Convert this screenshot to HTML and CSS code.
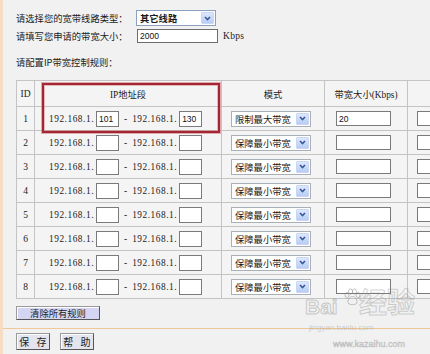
FILE: index.html
```html
<!DOCTYPE html>
<html lang="zh-CN">
<head>
<meta charset="utf-8">
<title>IP带宽控制</title>
<link rel="stylesheet" href="styles.css">
</head>
<body>
<div class="page">
  <div class="top">
    <div class="line">
      <span class="label">请选择您的宽带线路类型：</span>
      <div class="sel sel-top"><span class="bold">其它线路</span><span class="arr"><svg width="7" height="5" viewBox="0 0 7 5"><path d="M1 1 L3.5 3.6 L6 1" fill="none" stroke="#3d5a98" stroke-width="1.6"/></svg></span></div>
    </div>
    <div class="line l2">
      <span class="label">请填写您申请的带宽大小：</span>
      <input class="txt txt-bw" type="text" value="2000">
      <span class="unit">Kbps</span>
    </div>
    <div class="line l3"><span class="label">请配置IP带宽控制规则：</span></div>

    <div class="tablewrap">
      <table class="rules">
        <thead>
          <tr><th class="c-id">ID</th><th class="c-ip">IP地址段</th><th class="c-mode">模式</th><th class="c-bw">带宽大小(Kbps)</th><th class="c-x"></th></tr>
        </thead>
        <tbody>
          <tr><td class="id">1</td><td><div class="ipw"><span class="ip">192.168.1.</span><input class="txt box" type="text" value="101"><span class="dash">-</span><span class="ip">192.168.1.</span><input class="txt box box2" type="text" value="130"></div></td><td><div class="cw cw-mode"><div class="sel"><span>限制最大带宽</span><span class="arr"><svg width="7" height="5" viewBox="0 0 7 5"><path d="M1 1 L3.5 3.6 L6 1" fill="none" stroke="#3d5a98" stroke-width="1.6"/></svg></span></div></div></td><td><div class="cw cw-bw"><input class="txt bw" type="text" value="20"></div></td><td><div class="cw cw-x"><input class="txt xx" type="text" value=""></div></td></tr>
          <tr><td class="id">2</td><td><div class="ipw"><span class="ip">192.168.1.</span><input class="txt box" type="text" value=""><span class="dash">-</span><span class="ip">192.168.1.</span><input class="txt box box2" type="text" value=""></div></td><td><div class="cw cw-mode"><div class="sel"><span>保障最小带宽</span><span class="arr"><svg width="7" height="5" viewBox="0 0 7 5"><path d="M1 1 L3.5 3.6 L6 1" fill="none" stroke="#3d5a98" stroke-width="1.6"/></svg></span></div></div></td><td><div class="cw cw-bw"><input class="txt bw" type="text" value=""></div></td><td><div class="cw cw-x"><input class="txt xx" type="text" value=""></div></td></tr>
          <tr><td class="id">3</td><td><div class="ipw"><span class="ip">192.168.1.</span><input class="txt box" type="text" value=""><span class="dash">-</span><span class="ip">192.168.1.</span><input class="txt box box2" type="text" value=""></div></td><td><div class="cw cw-mode"><div class="sel"><span>保障最小带宽</span><span class="arr"><svg width="7" height="5" viewBox="0 0 7 5"><path d="M1 1 L3.5 3.6 L6 1" fill="none" stroke="#3d5a98" stroke-width="1.6"/></svg></span></div></div></td><td><div class="cw cw-bw"><input class="txt bw" type="text" value=""></div></td><td><div class="cw cw-x"><input class="txt xx" type="text" value=""></div></td></tr>
          <tr><td class="id">4</td><td><div class="ipw"><span class="ip">192.168.1.</span><input class="txt box" type="text" value=""><span class="dash">-</span><span class="ip">192.168.1.</span><input class="txt box box2" type="text" value=""></div></td><td><div class="cw cw-mode"><div class="sel"><span>保障最小带宽</span><span class="arr"><svg width="7" height="5" viewBox="0 0 7 5"><path d="M1 1 L3.5 3.6 L6 1" fill="none" stroke="#3d5a98" stroke-width="1.6"/></svg></span></div></div></td><td><div class="cw cw-bw"><input class="txt bw" type="text" value=""></div></td><td><div class="cw cw-x"><input class="txt xx" type="text" value=""></div></td></tr>
          <tr><td class="id">5</td><td><div class="ipw"><span class="ip">192.168.1.</span><input class="txt box" type="text" value=""><span class="dash">-</span><span class="ip">192.168.1.</span><input class="txt box box2" type="text" value=""></div></td><td><div class="cw cw-mode"><div class="sel"><span>保障最小带宽</span><span class="arr"><svg width="7" height="5" viewBox="0 0 7 5"><path d="M1 1 L3.5 3.6 L6 1" fill="none" stroke="#3d5a98" stroke-width="1.6"/></svg></span></div></div></td><td><div class="cw cw-bw"><input class="txt bw" type="text" value=""></div></td><td><div class="cw cw-x"><input class="txt xx" type="text" value=""></div></td></tr>
          <tr><td class="id">6</td><td><div class="ipw"><span class="ip">192.168.1.</span><input class="txt box" type="text" value=""><span class="dash">-</span><span class="ip">192.168.1.</span><input class="txt box box2" type="text" value=""></div></td><td><div class="cw cw-mode"><div class="sel"><span>保障最小带宽</span><span class="arr"><svg width="7" height="5" viewBox="0 0 7 5"><path d="M1 1 L3.5 3.6 L6 1" fill="none" stroke="#3d5a98" stroke-width="1.6"/></svg></span></div></div></td><td><div class="cw cw-bw"><input class="txt bw" type="text" value=""></div></td><td><div class="cw cw-x"><input class="txt xx" type="text" value=""></div></td></tr>
          <tr><td class="id">7</td><td><div class="ipw"><span class="ip">192.168.1.</span><input class="txt box" type="text" value=""><span class="dash">-</span><span class="ip">192.168.1.</span><input class="txt box box2" type="text" value=""></div></td><td><div class="cw cw-mode"><div class="sel"><span>保障最小带宽</span><span class="arr"><svg width="7" height="5" viewBox="0 0 7 5"><path d="M1 1 L3.5 3.6 L6 1" fill="none" stroke="#3d5a98" stroke-width="1.6"/></svg></span></div></div></td><td><div class="cw cw-bw"><input class="txt bw" type="text" value=""></div></td><td><div class="cw cw-x"><input class="txt xx" type="text" value=""></div></td></tr>
          <tr><td class="id">8</td><td><div class="ipw"><span class="ip">192.168.1.</span><input class="txt box" type="text" value=""><span class="dash">-</span><span class="ip">192.168.1.</span><input class="txt box box2" type="text" value=""></div></td><td><div class="cw cw-mode"><div class="sel"><span>保障最小带宽</span><span class="arr"><svg width="7" height="5" viewBox="0 0 7 5"><path d="M1 1 L3.5 3.6 L6 1" fill="none" stroke="#3d5a98" stroke-width="1.6"/></svg></span></div></div></td><td><div class="cw cw-bw"><input class="txt bw" type="text" value=""></div></td><td><div class="cw cw-x"><input class="txt xx" type="text" value=""></div></td></tr>
        </tbody>
      </table>
      <div class="mark"></div>
    </div>

    <button class="btn btn-clear" type="button">清除所有规则</button>
  </div>
  <div class="divider"></div>
  <div class="bottom">
    <button class="btn btn-sm" type="button">保 存</button>
    <button class="btn btn-sm" type="button">帮 助</button>
  </div>

  <div class="watermark" aria-hidden="true">
    <span class="wm-bai">Bai</span>
    <svg class="wm-paw" width="18" height="18" viewBox="0 0 18 18"><g fill="none" stroke="rgba(130,130,130,0.45)" stroke-width="1"><ellipse cx="4" cy="7" rx="2" ry="2.6"/><ellipse cx="7.5" cy="3.5" rx="2" ry="2.6"/><ellipse cx="11.5" cy="3.5" rx="2" ry="2.6"/><ellipse cx="15" cy="7" rx="2" ry="2.6"/><path d="M9.5 8.5 C6 8.5 4 13 5.5 15.5 C7 17 12 17 13.5 15.5 C15 13 13 8.5 9.5 8.5 Z"/></g></svg>
    <span class="wm-jy">经验</span>
    <span class="wm-url">jingyan.baidu.com</span>
    <span class="wm-url2">www.kazaihu.com</span>
  </div>
</div>
</body>
</html>
```

FILE: styles.css
```css
* { box-sizing: border-box; }

html, body {
  margin: 0;
  padding: 0;
}

body {
  width: 430px;
  height: 354px;
  overflow: hidden;
  background: #f1f1f1;
  font-family: "Liberation Serif", "Noto Sans CJK SC", serif;
  font-size: 9.3px;
  color: #1a1a1a;
}

.page {
  position: relative;
  height: 354px;
  border-left: 3px solid #f5dcc3;
}

.top {
  padding: 10px 0 0 13px;
}

.line {
  display: flex;
  align-items: center;
  height: 16px;
}

.l2 { margin-top: 2px; }
.l3 { margin-top: 10px; }

.label {
  width: 120px;
  white-space: nowrap;
  font-family: "Noto Sans CJK SC", sans-serif;
}

.l3 .label { width: auto; }

.bold { font-weight: bold; }

.sel {
  display: flex;
  align-items: center;
  justify-content: space-between;
  width: 80px;
  height: 16px;
  padding-left: 3px;
  background: #fff;
  border: 1px solid #a9b0b8;
  font-family: "Noto Sans CJK SC", sans-serif;
  white-space: nowrap;
}

.sel-top {
  border-color: #8aa2c0;
}

.arr {
  display: flex;
  align-items: center;
  justify-content: center;
  width: 13px;
  height: 12px;
  margin-right: 1px;
  border-radius: 1px;
  background: linear-gradient(#dde7fd, #b9ccf6);
  border: 1px solid #c9d7f5;
}

.txt {
  margin: 0;
  padding: 0 2px;
  background: #fff;
  border: 1px solid #7a7a7a;
  border-radius: 0;
  font-family: "Liberation Sans", sans-serif;
  font-size: 8.5px;
  color: #111;
  outline: none;
}

.txt-bw {
  width: 81px;
  height: 14px;
  margin-left: 1px;
  border-color: #6d6d6d;
}

.unit {
  margin-left: 5px;
  font-size: 9.5px;
  letter-spacing: 0.3px;
}

/* table */
.tablewrap {
  position: relative;
  margin-top: 10px;
  width: 452px;
}

.rules {
  width: 452px;
  table-layout: fixed;
  border-collapse: separate;
  border-spacing: 0;
  border-top: 1px solid #c4c4c4;
  border-left: 1px solid #c4c4c4;
}

.rules th,
.rules td {
  padding: 0;
  border-right: 1px solid #c4c4c4;
  border-bottom: 1px solid #c4c4c4;
  background: #f4f4f4;
  font-weight: normal;
  white-space: nowrap;
  overflow: hidden;
}

.rules thead tr { height: 26px; }
.rules tbody tr { height: 24px; }

.rules th {
  text-align: center;
  font-family: "Liberation Serif", "Noto Sans CJK SC", serif;
}

.c-id { width: 18px; }
.c-ip { width: 187px; }
.c-mode { width: 103px; }
.c-bw { width: 83px; }
.c-x { width: 60px; }

.c-id, .id {
  text-align: center;
  font-size: 9.5px;
}

.ipw {
  display: flex;
  align-items: center;
  padding-left: 14px;
}

.ip {
  letter-spacing: 0.55px;
  font-size: 9.3px;
}

.box {
  width: 23px;
  height: 16px;
  margin-left: 2px;
}

.box2 { margin-left: 2px; }

.dash {
  margin: 0 5px 0 5px;
}

.cw {
  display: flex;
  align-items: center;
}

.cw-mode { padding-left: 9px; }
.cw-bw { padding-left: 11px; }
.cw-x { padding-left: 9px; }

.bw {
  width: 55px;
  height: 15px;
}

.xx {
  width: 60px;
  height: 15px;
}

.mark {
  position: absolute;
  left: 26px;
  top: 3px;
  width: 178px;
  height: 50px;
  border: 2px solid #a52633;
  box-shadow: 0 0 0 1px rgba(205, 110, 120, 0.55), inset 0 0 0 1px rgba(205, 110, 120, 0.45);
}

/* buttons */
.btn {
  display: flex;
  align-items: center;
  justify-content: center;
  margin: 0;
  padding: 0;
  font-family: "Liberation Serif", "Noto Sans CJK SC", serif;
  color: #1d1d1d;
  border: 1px solid #555;
  border-top-color: #9a9a9a;
  border-left-color: #9a9a9a;
  box-shadow: inset 1px 1px 0 #fff;
  border-radius: 0;
}

.btn-clear {
  width: 84px;
  height: 14px;
  margin-top: 7px;
  background: #d3d5f3;
  font-size: 9.3px;
}

.divider {
  height: 1px;
  margin-top: 8px;
  background: #f0c796;
}

.bottom {
  display: flex;
  gap: 10px;
  margin-top: 4px;
  padding-left: 13px;
}

.btn-sm {
  width: 34px;
  height: 17px;
  background: #e3e4ee;
  font-size: 10px;
  letter-spacing: 2.4px;
  padding-left: 2px;
}

/* watermark */
.watermark {
  position: absolute;
  left: 300px;
  top: 286px;
  width: 130px;
  height: 68px;
  color: transparent;
  pointer-events: none;
}

.wm-bai {
  position: absolute;
  left: 2px;
  top: 10px;
  font-family: "Liberation Sans", sans-serif;
  font-weight: bold;
  font-size: 21px;
  line-height: 1;
  -webkit-text-stroke: 1px rgba(130, 130, 130, 0.4);
}

.wm-paw {
  position: absolute;
  left: 40px;
  top: 2px;
}

.wm-jy {
  position: absolute;
  left: 56px;
  top: 1px;
  font-family: "Noto Sans CJK SC", sans-serif;
  font-weight: bold;
  font-size: 28px;
  line-height: 1;
  -webkit-text-stroke: 1px rgba(130, 130, 130, 0.35);
}

.wm-url {
  position: absolute;
  left: 6px;
  top: 38px;
  font-family: "Liberation Sans", sans-serif;
  font-size: 8px;
  line-height: 1;
  color: rgba(120, 120, 120, 0.35);
}

.wm-url2 {
  position: absolute;
  left: 30px;
  top: 54px;
  font-family: "Liberation Sans", sans-serif;
  font-size: 9px;
  line-height: 1;
  color: transparent;
  -webkit-text-stroke: 0.6px rgba(130, 130, 130, 0.45);
}
```
